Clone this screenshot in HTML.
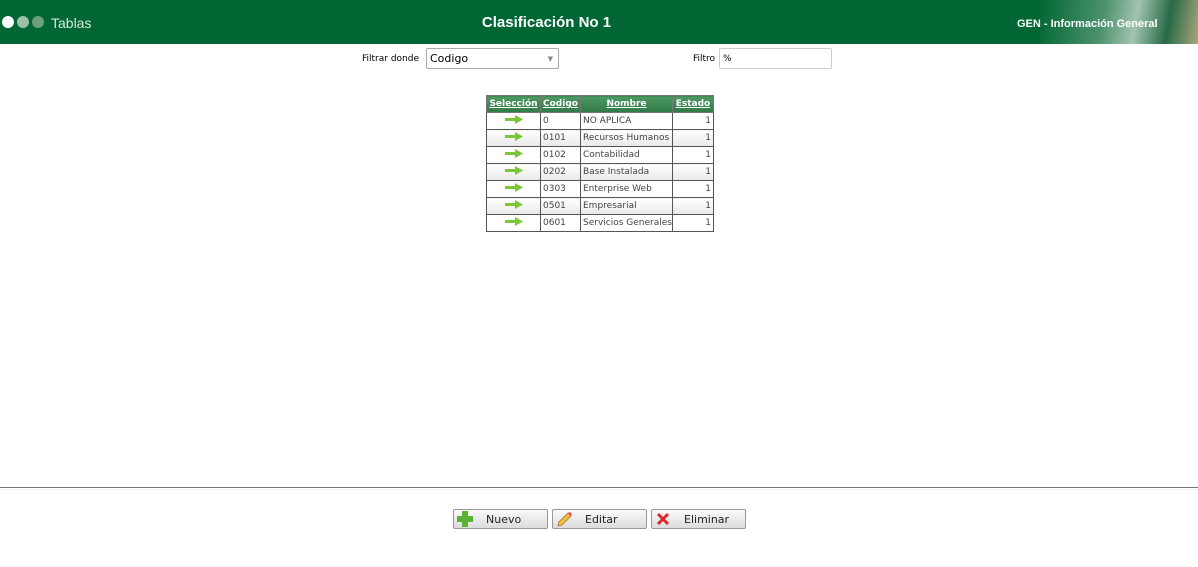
<!DOCTYPE html>
<html><head><meta charset="utf-8"><style>
body{margin:0;width:1198px;height:567px;background:#fff;font-family:"Liberation Sans",sans-serif;position:relative;overflow:hidden}
.hdr{position:absolute;left:0;top:0;width:1198px;height:44px;background:#006633;overflow:hidden}
.dot{position:absolute;top:16px;width:12px;height:12px;border-radius:50%}
.abs{position:absolute}
table{position:absolute;left:486px;top:95px;width:227px;table-layout:fixed;border-collapse:collapse;font-family:"DejaVu Sans",sans-serif;font-size:9px;color:#444}
td,th{border:1px solid #555;height:16px;padding:0 2px;white-space:nowrap;overflow:hidden}
th{height:16px;background:linear-gradient(#4f9a63,#2f7a45);color:#fff;text-decoration:underline;font-weight:bold;font-size:9px;border-color:#777;padding:0}
tr:nth-child(odd) td{background:linear-gradient(#fff,#e8e8e8)}
.btn{position:absolute;top:509px;width:95px;height:20px;border:1px solid #999;border-radius:2px;background:linear-gradient(#fafafa,#dcdcdc);font-family:"DejaVu Sans",sans-serif;font-size:11px;color:#222;box-sizing:border-box}
.btn span{position:absolute;left:32px;top:3px}
</style></head><body>
<div class="hdr">
 <div class="dot" style="left:2px;background:#fff"></div>
 <div class="dot" style="left:17px;background:#9fc0a8"></div>
 <div class="dot" style="left:32px;background:#6d9f7c"></div>
 <div class="abs" style="left:51px;top:15px;color:#d8e8dc;font-size:14px">Tablas</div>
 <div class="abs" style="left:0;width:1093px;top:14px;text-align:center;color:#fff;font-size:15px;font-weight:bold">Clasificación No 1</div>
 <div class="abs" style="left:1040px;top:0;width:158px;height:44px;background:linear-gradient(100deg,#006633 0%,#5b9a78 40%,#c0d4c6 60%,#2d6b48 80%,#c8b08a 100%);opacity:.85"></div>
 <div class="abs" style="left:1017px;top:18px;color:#fff;font-size:11px;font-weight:bold">GEN - Información General</div>
</div>
<div class="abs" style="left:362px;top:54px;font-size:9px;font-family:'DejaVu Sans',sans-serif">Filtrar donde</div>
<div class="abs" style="left:426px;top:48px;border:1px solid #aaa;border-radius:2px;font-size:11px;font-family:'DejaVu Sans',sans-serif;line-height:20px;padding-left:3px;box-sizing:border-box;width:133px;height:21px">Codigo<span style="position:absolute;right:5px;top:0;color:#888;font-size:7px">▼</span></div>
<div class="abs" style="left:693px;top:54px;font-size:9px;font-family:'DejaVu Sans',sans-serif">Filtro</div>
<div class="abs" style="left:719px;top:48px;width:113px;height:21px;border:1px solid #ccc;border-radius:2px;box-sizing:border-box;font-size:9px;font-family:'DejaVu Sans',sans-serif;line-height:20px;padding-left:3px">%</div>
<table>
<colgroup><col style="width:54px"><col style="width:40px"><col style="width:92px"><col style="width:41px"></colgroup>
<tr><th>Selección</th><th>Codigo</th><th>Nombre</th><th>Estado</th></tr>
<tr><td style="text-align:center"><svg width="18" height="9"><path d="M0 3h10V0l8 4.5-8 4.5V6H0z" fill="#7cc63a"/></svg></td><td>0</td><td>NO APLICA</td><td style="text-align:right">1</td></tr>
<tr><td style="text-align:center"><svg width="18" height="9"><path d="M0 3h10V0l8 4.5-8 4.5V6H0z" fill="#7cc63a"/></svg></td><td>0101</td><td>Recursos Humanos</td><td style="text-align:right">1</td></tr>
<tr><td style="text-align:center"><svg width="18" height="9"><path d="M0 3h10V0l8 4.5-8 4.5V6H0z" fill="#7cc63a"/></svg></td><td>0102</td><td>Contabilidad</td><td style="text-align:right">1</td></tr>
<tr><td style="text-align:center"><svg width="18" height="9"><path d="M0 3h10V0l8 4.5-8 4.5V6H0z" fill="#7cc63a"/></svg></td><td>0202</td><td>Base Instalada</td><td style="text-align:right">1</td></tr>
<tr><td style="text-align:center"><svg width="18" height="9"><path d="M0 3h10V0l8 4.5-8 4.5V6H0z" fill="#7cc63a"/></svg></td><td>0303</td><td>Enterprise Web</td><td style="text-align:right">1</td></tr>
<tr><td style="text-align:center"><svg width="18" height="9"><path d="M0 3h10V0l8 4.5-8 4.5V6H0z" fill="#7cc63a"/></svg></td><td>0501</td><td>Empresarial</td><td style="text-align:right">1</td></tr>
<tr><td style="text-align:center"><svg width="18" height="9"><path d="M0 3h10V0l8 4.5-8 4.5V6H0z" fill="#7cc63a"/></svg></td><td>0601</td><td>Servicios Generales</td><td style="text-align:right">1</td></tr>
</table>
<div class="abs" style="left:0;top:487px;width:1198px;height:1px;background:#777"></div>
<div class="abs" style="left:0;top:489px;width:1198px;height:1px;background:#eee"></div>
<div class="btn" style="left:453px"><svg class="abs" style="left:3px;top:1px" width="16" height="16"><path d="M5 0h6v5h5v6h-5v5H5v-5H0V5h5z" fill="#5bb336"/></svg><span>Nuevo</span></div>
<div class="btn" style="left:552px"><svg class="abs" style="left:3px;top:1px" width="16" height="16"><path d="M2 15l1-4 9-9 3 3-9 9z" fill="#f0c040" stroke="#b07020" stroke-width=".8"/><path d="M12 2l2-1 2 2-1 2z" fill="#e05050"/></svg><span>Editar</span></div>
<div class="btn" style="left:651px"><svg class="abs" style="left:4px;top:2px" width="14" height="14"><path d="M2 2l10 10M12 2L2 12" stroke="#e02a2a" stroke-width="3"/></svg><span>Eliminar</span></div>
</body></html>
